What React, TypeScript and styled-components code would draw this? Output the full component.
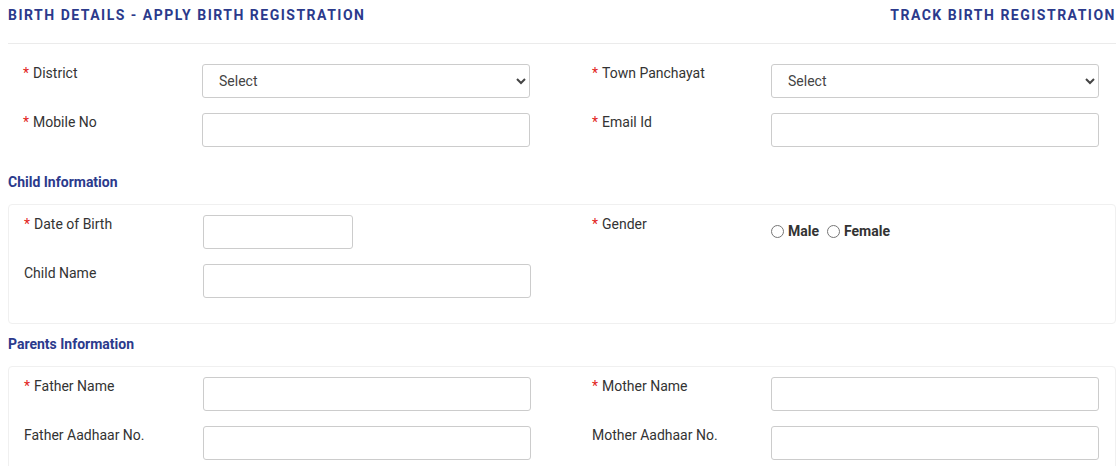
import React from "react";
import styled, { createGlobalStyle } from "styled-components";

const navy = "#2b3a8c";

const GlobalStyle = createGlobalStyle`
  body {
    margin: 0;
    background: #ffffff;
    font-family: Roboto, "Liberation Sans", Arial, sans-serif;
    color: #333333;
  }
`;

type FieldDef = {
  label: string;
  required?: boolean;
  kind: "select" | "text" | "short" | "gender" | "empty";
};

const contactFields: FieldDef[][] = [
  [
    { label: "District", required: true, kind: "select" },
    { label: "Town Panchayat", required: true, kind: "select" },
  ],
  [
    { label: "Mobile No", required: true, kind: "text" },
    { label: "Email Id", required: true, kind: "text" },
  ],
];

const childFields: FieldDef[][] = [
  [
    { label: "Date of Birth", required: true, kind: "short" },
    { label: "Gender", required: true, kind: "gender" },
  ],
  [
    { label: "Child Name", kind: "text" },
    { label: "", kind: "empty" },
  ],
];

const parentFields: FieldDef[][] = [
  [
    { label: "Father Name", required: true, kind: "text" },
    { label: "Mother Name", required: true, kind: "text" },
  ],
  [
    { label: "Father Aadhaar No.", kind: "text" },
    { label: "Mother Aadhaar No.", kind: "text" },
  ],
];

function FieldControl({ kind }: { kind: FieldDef["kind"] }) {
  if (kind === "select") {
    return (
      <SelectBox defaultValue="">
        <option value="">Select</option>
      </SelectBox>
    );
  }
  if (kind === "gender") {
    return (
      <RadioGroup>
        <RadioOption>
          <input type="radio" name="gender" />
          Male
        </RadioOption>
        <RadioOption>
          <input type="radio" name="gender" />
          Female
        </RadioOption>
      </RadioGroup>
    );
  }
  if (kind === "empty") return null;
  return <TextBox type="text" $short={kind === "short"} />;
}

function FieldGrid({ rows, boxed }: { rows: FieldDef[][]; boxed?: boolean }) {
  return (
    <Grid $boxed={boxed}>
      {rows.flat().map((f, i) => (
        <Field key={i}>
          <Label>
            {f.required && <Star>*</Star>}
            {f.label}
          </Label>
          <FieldControl kind={f.kind} />
        </Field>
      ))}
    </Grid>
  );
}

export default function App() {
  return (
    <>
      <GlobalStyle />
      <Page>
        <TopBar>
          <Title>BIRTH DETAILS - APPLY BIRTH REGISTRATION</Title>
          <Title>TRACK BIRTH REGISTRATION</Title>
        </TopBar>
        <Divider />
        <Section>
          <FieldGrid rows={contactFields} />
        </Section>
        <SectionHeading>Child Information</SectionHeading>
        <Card>
          <FieldGrid rows={childFields} boxed />
        </Card>
        <SectionHeading>Parents Information</SectionHeading>
        <Card>
          <FieldGrid rows={parentFields} boxed />
        </Card>
      </Page>
    </>
  );
}

const Page = styled.div`
  padding: 5px 2px 0 8px;
`;

const TopBar = styled.div`
  display: flex;
  justify-content: space-between;
  align-items: center;
`;

const Title = styled.div`
  font-size: 14px;
  line-height: 20px;
  font-weight: 700;
  letter-spacing: 1.5px;
  color: ${navy};
`;

const Divider = styled.hr`
  margin: 18px 0 0;
  border: 0;
  border-top: 1px solid #ebebeb;
`;

const Section = styled.div`
  padding-top: 20px;
`;

const SectionHeading = styled.div`
  margin: 11px 0 13px;
  font-size: 14px;
  line-height: 18px;
  font-weight: 700;
  color: ${navy};
`;

const Card = styled.div`
  border: 1px solid #f0f0f0;
  border-radius: 4px;
  padding-top: 10px;
`;

const Grid = styled.div<{ $boxed?: boolean }>`
  display: grid;
  grid-template-columns: 507px 507px;
  column-gap: ${(p) => (p.$boxed ? "61px" : "62px")};
  row-gap: 15px;
  padding: 0 0 ${(p) => (p.$boxed ? "25px" : "15px")} 15px;
`;

const Field = styled.div`
  display: grid;
  grid-template-columns: 179px 328px;
  align-items: start;
  min-height: 34px;
`;

const Label = styled.div`
  font-size: 14px;
  line-height: 20px;
  color: #333333;
  margin-top: -1px;
`;

const Star = styled.span`
  color: #e2231a;
  margin-right: 4px;
`;

const SelectBox = styled.select`
  height: 34px;
  width: 328px;
  box-sizing: border-box;
  padding: 0 8px 0 12px;
  border: 1px solid #cccccc;
  border-radius: 3px;
  background: #ffffff;
  font-family: Roboto, "Liberation Sans", Arial, sans-serif;
  font-size: 14px;
  color: #444444;
`;

const TextBox = styled.input<{ $short?: boolean }>`
  height: 34px;
  width: ${(p) => (p.$short ? "150px" : "328px")};
  box-sizing: border-box;
  padding: 0 12px;
  border: 1px solid #cccccc;
  border-radius: 3px;
  background: #ffffff;
  font-family: Roboto, "Liberation Sans", Arial, sans-serif;
  font-size: 14px;
`;

const RadioGroup = styled.div`
  display: flex;
  align-items: center;
  gap: 8px;
  padding-top: 8px;
`;

const RadioOption = styled.label`
  display: flex;
  align-items: center;
  gap: 4px;
  font-size: 14px;
  font-weight: 700;
  color: #333333;

  input {
    margin: 0;
    width: 13px;
    height: 13px;
  }
`;
